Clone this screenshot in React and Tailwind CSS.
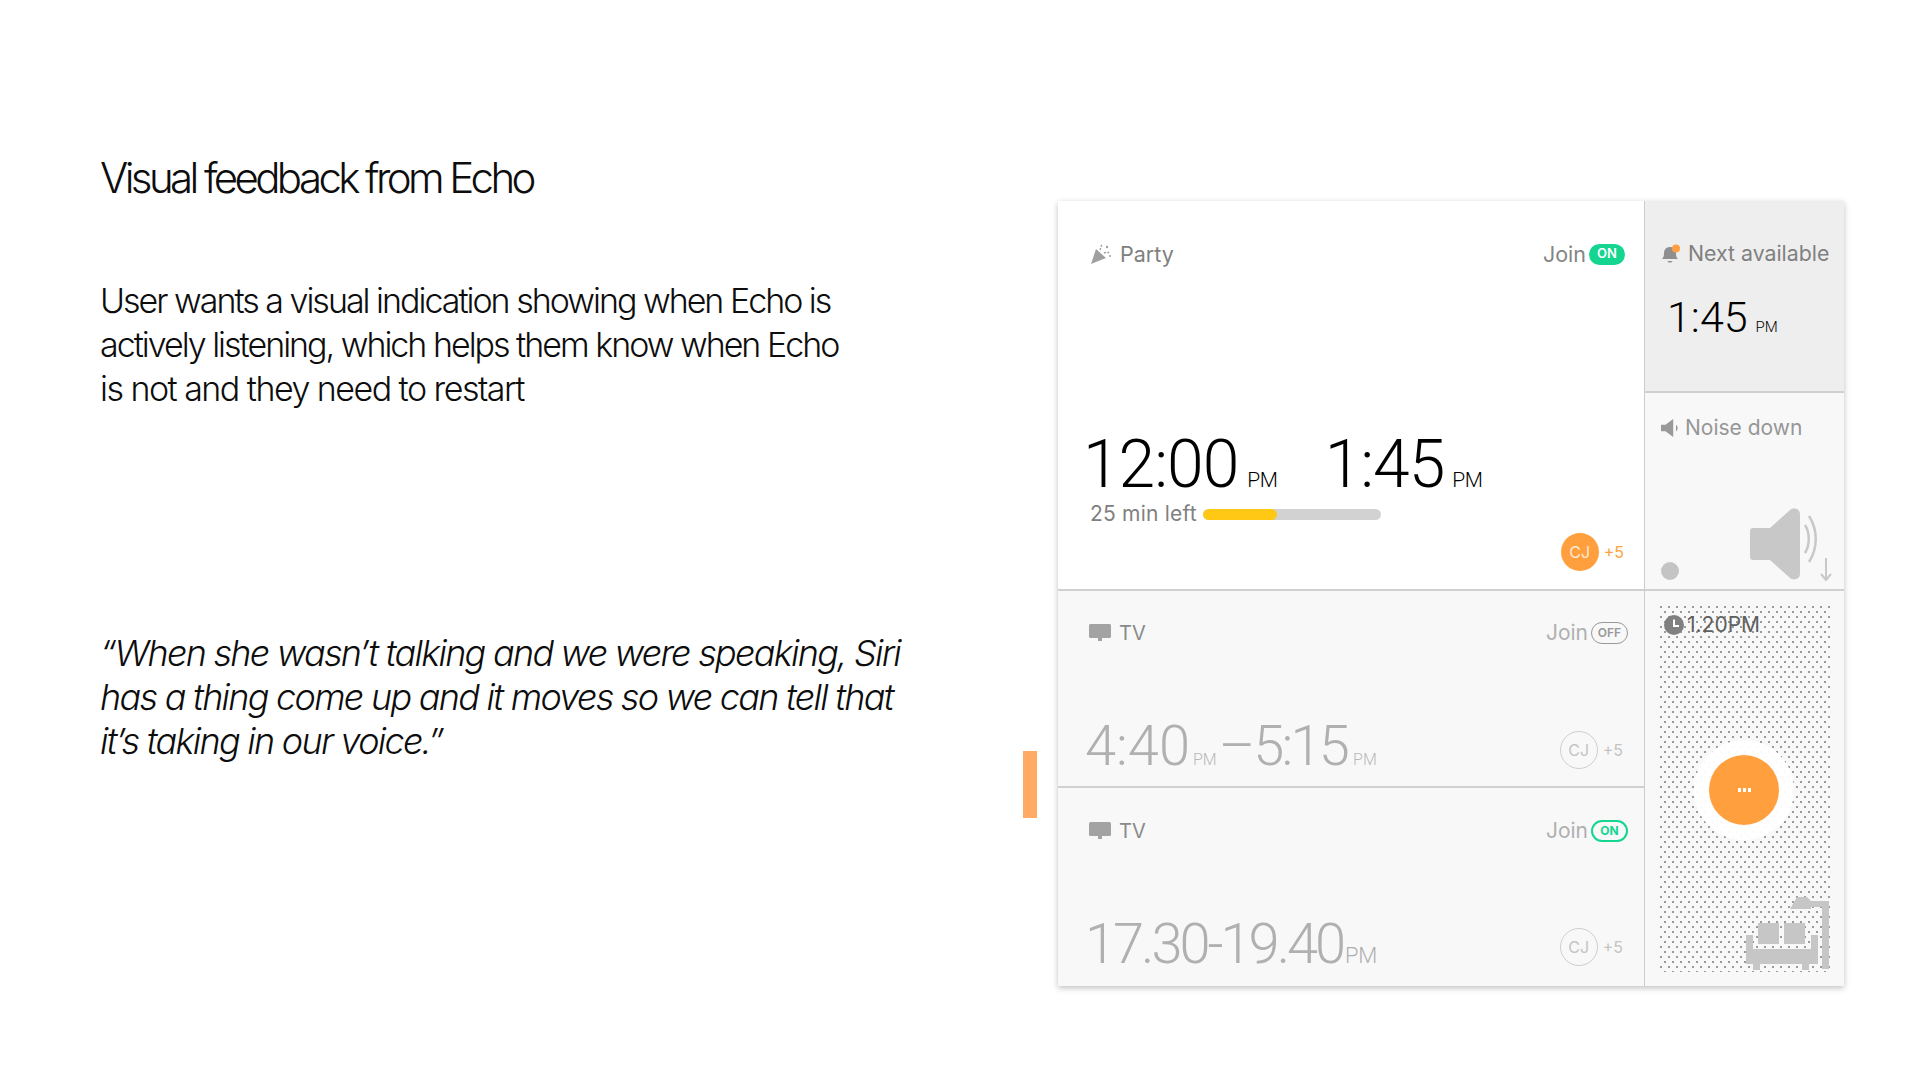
import React from 'react';

const uiFont = "font-['Inter','Noto_Sans',sans-serif]";
const timeFont = "font-['Roboto','Noto_Sans',sans-serif]";

const PartyIcon = () => (
  <svg viewBox="0 0 22 22" className="w-[22px] h-[22px]">
    <path d="M1 21 L6 6 L16 15 Z" fill="#a0a0a0" />
    <path d="M10 7 C11 5 10 4 12 2 M14 10 C16 9 17 10 20 9" stroke="#a0a0a0" strokeWidth="1.4" fill="none" strokeDasharray="2 1.5" />
    <circle cx="17" cy="4" r="1.2" fill="#a0a0a0" />
    <circle cx="20" cy="13" r="1" fill="#a0a0a0" />
  </svg>
);

const TvIcon = () => (
  <svg viewBox="0 0 22 18" className="w-[22px] h-[18px]">
    <rect x="0" y="0" width="22" height="14" rx="1.5" fill="#a3a3a3" />
    <rect x="9" y="14" width="4" height="3" fill="#a3a3a3" />
  </svg>
);

const BellIcon = () => (
  <svg viewBox="0 0 20 20" className="w-[20px] h-[20px]">
    <path d="M1 15 C3 13 3 11 3 9 C3 5 6 3 9 3 C12 3 15 5 15 9 C15 11 15 13 17 15 Z" fill="#8f8f8f" />
    <path d="M6.5 17 H11.5 C11 19 7 19 6.5 17 Z" fill="#8f8f8f" />
    <circle cx="15" cy="4.5" r="4" fill="#ff9f40" />
  </svg>
);

const SpeakerIcon = ({ className }) => (
  <svg viewBox="0 0 52 74" className={className}>
    <path d="M3 21 H20 L40 3 C44 0 50 2 50 7 V67 C50 72 44 74 40 71 L20 53 H3 C1 53 0 52 0 50 V24 C0 22 1 21 3 21 Z" fill="#c8c8c8" />
  </svg>
);

const SmallSpeaker = () => (
  <svg viewBox="0 0 18 18" className="w-[20px] h-[20px]">
    <path d="M0 6 H4 L11 1 V17 L4 12 H0 Z" fill="#999999" />
    <path d="M13.5 6 C15.5 7.5 15.5 10.5 13.5 12 Z" fill="#999999" />
  </svg>
);

const ClockIcon = () => (
  <svg viewBox="0 0 20 20" className="w-[20px] h-[20px] shrink-0">
    <circle cx="10" cy="10" r="10" fill="#808080" />
    <path d="M10 4.5 V11 H15" stroke="#fff" strokeWidth="2" fill="none" />
  </svg>
);

const SofaIcon = () => (
  <svg viewBox="0 0 84 76" className="w-[84px] h-[76px]">
    <g fill="#c6c6c6">
      <path d="M44 13 L51 1 H61 L65 5 H83 V73 H76 V11 H65 V13 Z" />
      <rect x="12" y="27" width="21" height="21" />
      <rect x="38" y="27" width="21" height="21" />
      <rect x="0" y="39" width="7" height="29" />
      <rect x="65" y="39" width="7" height="29" />
      <rect x="7" y="53" width="58" height="15" />
      <rect x="7" y="68" width="7" height="6" />
      <rect x="56" y="68" width="7" height="6" />
    </g>
  </svg>
);

const Avatar = ({ on }) => (
  <div className={`flex items-center gap-[5px] ${uiFont}`}>
    <div
      className={`w-[38px] h-[38px] rounded-full flex items-center justify-center text-[16px] ${
        on ? 'bg-[#ff9f3d] text-[#ffe9d4]' : 'border border-[#cfcfcf] text-[#c4c4c4]'
      }`}
    >
      CJ
    </div>
    <span className={`text-[16px] ${on ? 'text-[#ff9f3d]' : 'text-[#c4c4c4]'}`}>+5</span>
  </div>
);

const TvRow = ({ pill, children, height, headGap, timeGap, avatarGap }) => (
  <div className={`${height} bg-[#f8f8f8] flex flex-col pl-[27px] pr-[16px]`}>
    <div className={`flex items-center justify-between ${headGap} ${uiFont}`}>
      <div className="flex items-center gap-[8px] text-[20px] text-[#8a8a8a] pl-[4px]">
        <TvIcon />
        <span>TV</span>
      </div>
      <div className="flex items-center gap-[3px] text-[21px] text-[#b0b0b0]">
        <span>Join</span>
        {pill}
      </div>
    </div>
    <div className={`flex items-end justify-between mt-auto ${timeGap} pr-[5px]`}>
      <div className={`flex items-baseline text-[#b0b0b0] ${timeFont} font-light`}>{children}</div>
      <div className={avatarGap}>
        <Avatar />
      </div>
    </div>
  </div>
);

export default function App() {
  return (
    <div className="w-full h-[1080px] bg-white flex overflow-hidden">
      {/* Left copy */}
      <div className={`w-[1023px] pl-[100px] shrink-0 text-[#0d0d0d] ${uiFont}`}>
        <h1 className="mt-[154px] text-[42px] leading-[48px] font-light tracking-[-0.086em]">Visual feedback from Echo</h1>
        <p className="mt-[77px] text-[34px] leading-[44px] font-light tracking-[-0.059em] whitespace-nowrap">
          User wants a visual indication showing when Echo is
          <br />
          actively listening, which helps them know when Echo
          <br />
          <span className="tracking-[-0.045em]">is not and they need to restart</span>
        </p>
        <p className="mt-[220px] text-[36px] leading-[44px] font-light italic tracking-[-0.048em] whitespace-nowrap">
          “When she wasn’t talking and we were speaking, Siri
          <br />
          has a thing come up and it moves so we can tell that
          <br />
          it’s taking in our voice.”
        </p>
      </div>

      {/* Orange marker */}
      <div className="w-[14px] h-[67px] mt-[751px] bg-[#ffab66] shrink-0"></div>

      {/* Device card */}
      <div className="ml-[21px] mt-[201px] w-[786px] h-[785px] flex shrink-0 shadow-[0_2px_6px_rgba(0,0,0,0.25)]">
        <div className="w-[587px] flex flex-col border-r border-[#cccccc]">
          <div className="h-[390px] bg-white border-b-2 border-[#d0d0d0] flex flex-col pl-[32px] pr-[19px]">
            <div className={`flex items-center justify-between mt-[37px] ${uiFont}`}>
              <div className="flex items-center gap-[8px] text-[21.5px] text-[#808080]">
                <PartyIcon />
                <span>Party</span>
              </div>
              <div className="flex items-center gap-[3px] text-[21.5px] text-[#858585]">
                <span>Join</span>
                <span className="w-[36px] h-[21px] rounded-full bg-[#14d690] text-white text-[13px] font-semibold flex items-center justify-center">ON</span>
              </div>
            </div>
            <div className={`flex items-baseline mt-[157px] -ml-[7px] text-black ${timeFont} font-light`}>
              <span className="text-[66px] leading-[76px] tracking-[-0.015em]">12:00</span>
              <span className="text-[21px] tracking-[-0.02em] ml-[9px]">PM</span>
              <span className="text-[66px] leading-[76px] tracking-[-0.015em] ml-[47px]">1:45</span>
              <span className="text-[21px] tracking-[-0.02em] ml-[8px]">PM</span>
            </div>
            <div className={`flex items-center gap-[6px] -mt-[5px] ${uiFont}`}>
              <span className="text-[21px] tracking-[0.01em] text-[#808080]">25 min left</span>
              <div className="w-[178px] h-[11px] rounded-full bg-[#d2d2d2] overflow-hidden">
                <div className="w-[74px] h-full rounded-full bg-[#ffc814]"></div>
              </div>
            </div>
            <div className="flex justify-end mt-[3px] pr-[1px]">
              <Avatar on />
            </div>
          </div>
          <TvRow
            height="h-[197px] border-b-2 border-[#d0d0d0]"
            headGap="mt-[26px]"
            timeGap="mb-[8px]"
            avatarGap="mb-[9px]"
            pill={<span className="w-[37px] h-[22px] rounded-full border border-[#999999] text-[#999999] text-[12px] font-semibold flex items-center justify-center">OFF</span>}
          >
            <span className="text-[56px] leading-[64px]">4:40</span>
            <span className="text-[16px] text-[#b8b8b8] ml-[3px]">PM</span>
            <span className="text-[56px] leading-[64px] ml-[2px] tracking-[-0.05em]">–</span>
            <span className="text-[56px] leading-[64px] ml-[1px] tracking-[-0.05em]">5:15</span>
            <span className="text-[16px] text-[#b8b8b8] ml-[6px]">PM</span>
          </TvRow>
          <TvRow
            height="h-[198px]"
            headGap="mt-[27px]"
            timeGap="mb-[10px]"
            avatarGap="mb-[10px]"
            pill={<span className="w-[37px] h-[22px] rounded-full border-2 border-[#14d690] text-[#14d690] text-[12px] font-bold flex items-center justify-center">ON</span>}
          >
            <span className="text-[56px] leading-[64px] tracking-[-0.054em]">17.30-19.40</span>
            <span className="text-[22px] text-[#b0b0b0] ml-[2px] tracking-[-0.02em]">PM</span>
          </TvRow>
        </div>

        <div className={`w-[199px] flex flex-col ${uiFont}`}>
          <div className="h-[192px] bg-[#eeeeee] border-b-2 border-[#d0d0d0] pl-[16px] pt-[37px]">
            <div className="flex items-center gap-[7px] text-[21.3px] text-[#808080] whitespace-nowrap">
              <BellIcon />
              <span>Next available</span>
            </div>
            <div className={`flex items-baseline mt-[20px] ml-[6px] text-black ${timeFont} font-light`}>
              <span className="text-[43px] leading-[54px]">1:45</span>
              <span className="text-[15px] ml-[8px]">PM</span>
            </div>
          </div>
          <div className="h-[198px] bg-[#f8f8f8] border-b-2 border-[#d0d0d0] pl-[16px] pr-[10px] pt-[19px] flex flex-col">
            <div className="flex items-center gap-[4px] text-[21px] text-[#969696]">
              <SmallSpeaker />
              <span>Noise down</span>
            </div>
            <div className="flex items-end justify-between mt-auto mb-[7px]">
              <div className="w-[18px] h-[18px] rounded-full bg-[#c4c4c4] mb-[2px]"></div>
              <div className="flex items-end">
                <SpeakerIcon className="w-[52px] h-[76px]" />
                <svg viewBox="0 0 30 74" className="w-[30px] h-[74px] ml-[2px]">
                  <path d="M1 17 C6 25 6 37 1 45 M5 8 C14 22 14 40 5 54" stroke="#c8c8c8" strokeWidth="2.5" fill="none" />
                  <path d="M22 50 V72 M17 66 L22 72 L27 66" stroke="#c8c8c8" strokeWidth="2" fill="none" />
                </svg>
              </div>
            </div>
          </div>
          <div className="h-[395px] bg-[#f8f8f8] pl-[15px] pr-[12px] pt-[15px] pb-[14px]">
            <div className="h-full flex flex-col items-stretch [background-image:radial-gradient(circle_at_1px_1px,#9a9a9a_1px,transparent_1.2px),radial-gradient(circle_at_1px_1px,#9a9a9a_1px,transparent_1.2px)] [background-size:8px_10px] [background-position:0_0,4px_5px]">
              <div className="flex items-center gap-[3px] pl-[4px] pt-[3px] text-[21px] text-[#606060]">
                <ClockIcon />
                <span>1.20PM</span>
              </div>
              <div className="mt-[99px] self-center -ml-[4px] w-[100px] h-[100px] rounded-full bg-white/95 flex items-center justify-center">
                <div className="w-[70px] h-[70px] rounded-full bg-[#ff9f3d] flex items-center justify-center gap-[2px]">
                  <span className="w-[3px] h-[4px] bg-white"></span>
                  <span className="w-[3px] h-[4px] bg-white"></span>
                  <span className="w-[3px] h-[4px] bg-white"></span>
                </div>
              </div>
              <div className="mt-auto self-end pr-[2px]">
                <SofaIcon />
              </div>
            </div>
          </div>
        </div>
      </div>
    </div>
  );
}
